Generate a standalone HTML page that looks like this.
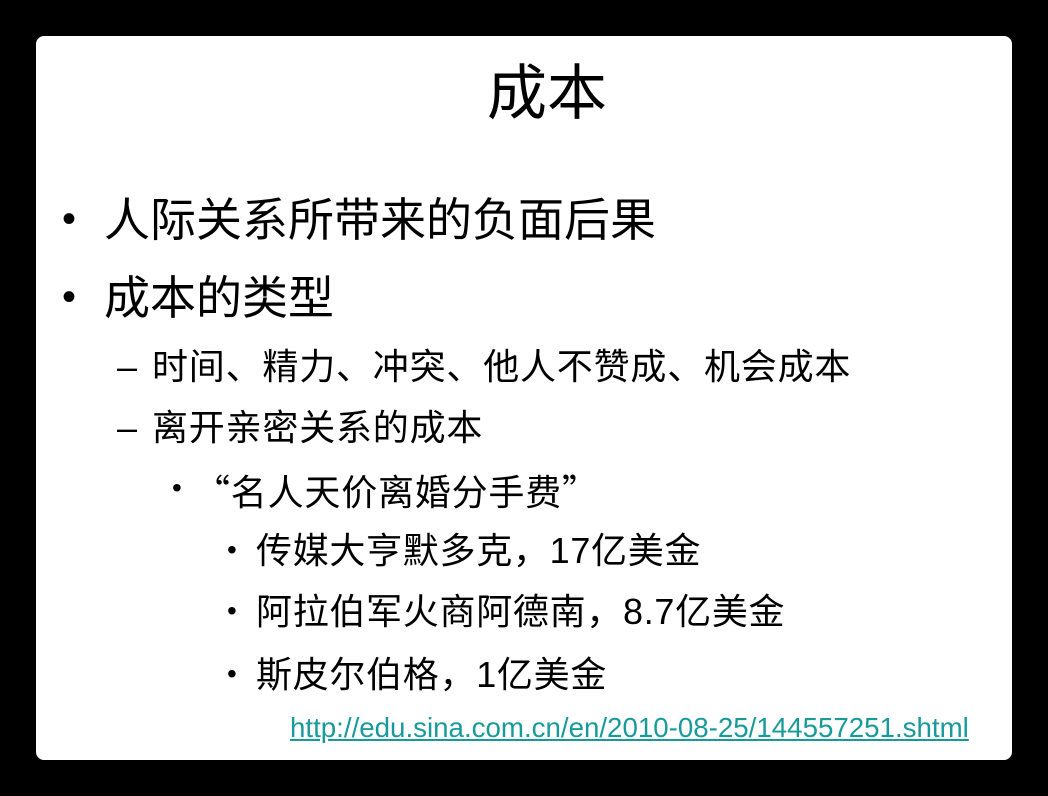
<!DOCTYPE html>
<html><head><meta charset="utf-8"><style>
body{margin:0;width:1048px;height:796px;background:#000;overflow:hidden;font-family:"Liberation Sans","Noto Sans CJK SC",sans-serif;color:#000}
.s{position:absolute;left:36px;top:36px;width:976px;height:724px;background:#fff;border-radius:8px}
.t{position:absolute;white-space:nowrap;line-height:1}
</style></head><body>
<div class="s"></div>
<div class="t" style="left:487px;top:64px;font-size:60px">成本</div>
<div class="t" style="left:62px;top:199px;font-size:40px">•</div>
<div class="t" style="left:104px;top:197px;font-size:46px">人际关系所带来的负面后果</div>
<div class="t" style="left:62px;top:277px;font-size:40px">•</div>
<div class="t" style="left:104px;top:275px;font-size:46px">成本的类型</div>
<div class="t" style="left:117px;top:349px;font-size:36px">–</div>
<div class="t" style="left:152px;top:349px;font-size:36px;letter-spacing:0.8px">时间、精力、冲突、他人不赞成、机会成本</div>
<div class="t" style="left:117px;top:410px;font-size:36px">–</div>
<div class="t" style="left:152px;top:410px;font-size:36px;letter-spacing:0.8px">离开亲密关系的成本</div>
<div class="t" style="left:172px;top:474px;font-size:28px">•</div>
<div class="t" style="left:194px;top:472px;font-size:36px;letter-spacing:0.8px;font-family:'Noto Sans CJK SC',sans-serif">“名人天价离婚分手费”</div>
<div class="t" style="left:227px;top:536px;font-size:28px">•</div>
<div class="t" style="left:256px;top:533px;font-size:36px;letter-spacing:0.7px">传媒大亨默多克，17亿美金</div>
<div class="t" style="left:227px;top:597px;font-size:28px">•</div>
<div class="t" style="left:256px;top:594px;font-size:36px;letter-spacing:0.7px">阿拉伯军火商阿德南，8.7亿美金</div>
<div class="t" style="left:227px;top:660px;font-size:28px">•</div>
<div class="t" style="left:256px;top:657px;font-size:36px;letter-spacing:0.7px">斯皮尔伯格，1亿美金</div>
<div class="t" style="left:290px;top:714px;font-size:27.7px;color:#199a9a;text-decoration:underline">http://edu.sina.com.cn/en/2010-08-25/144557251.shtml</div>
</body></html>
